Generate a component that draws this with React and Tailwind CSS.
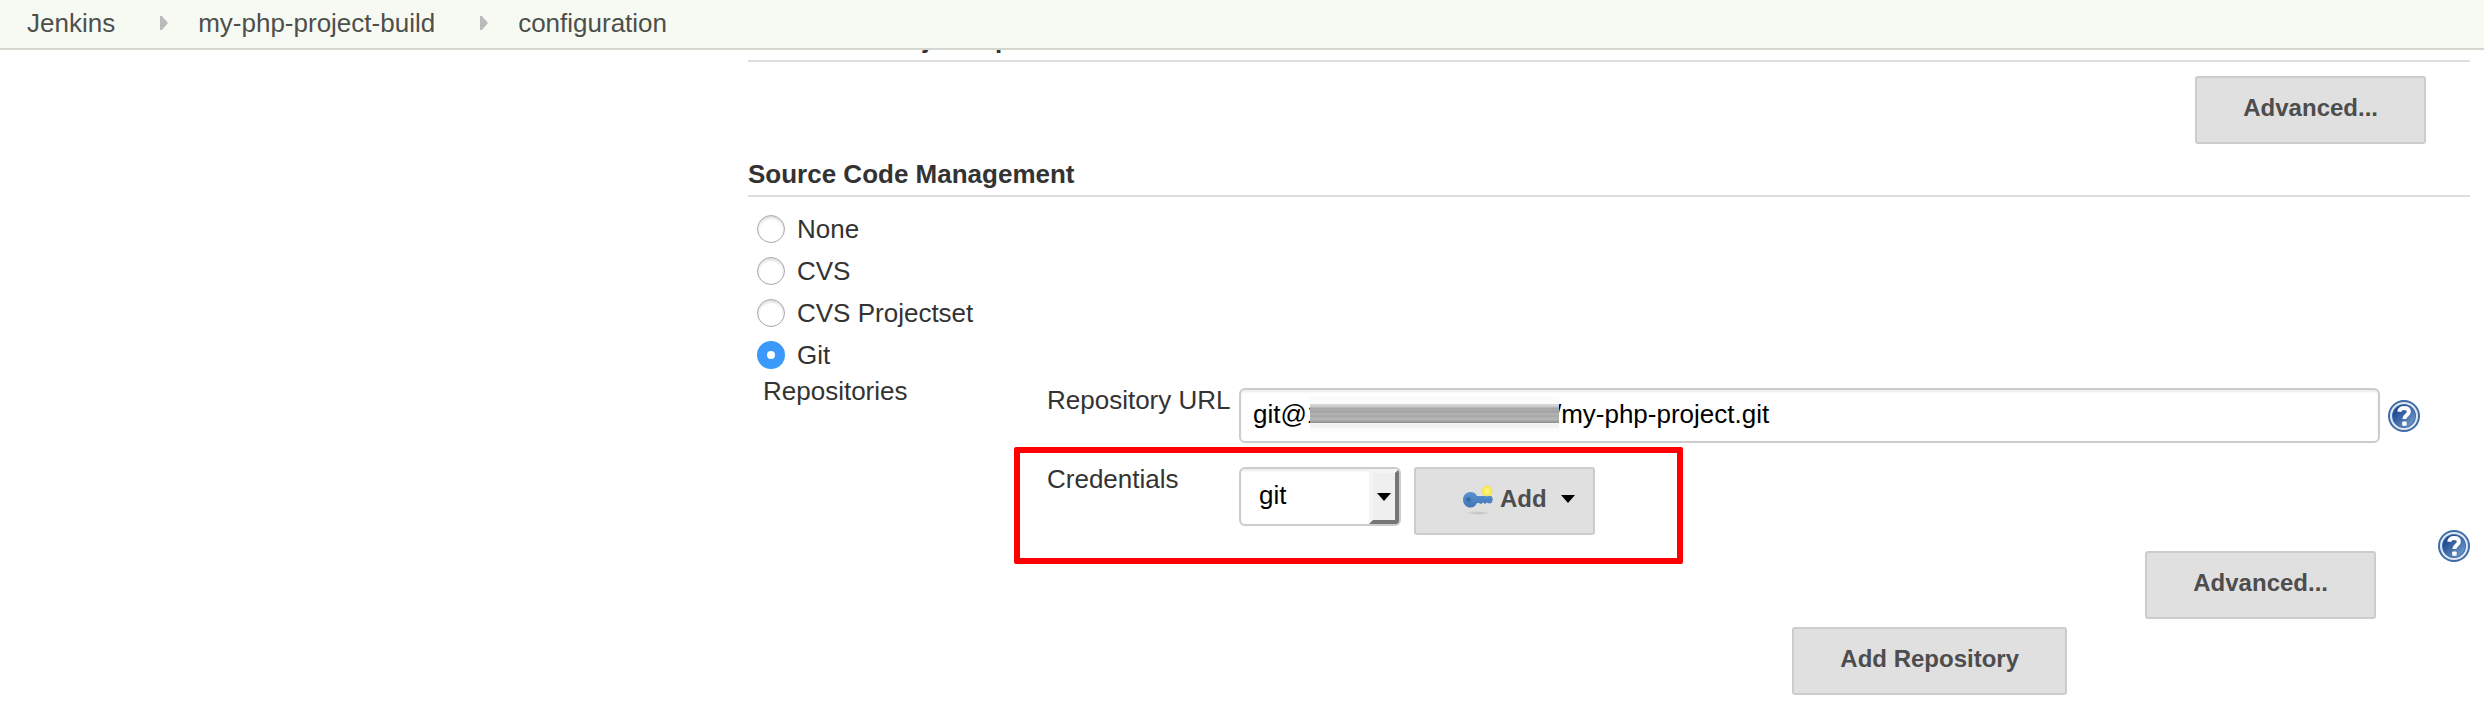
import React from "react";

const HEADING =
  "border-b-2 border-[#dedede] pb-1.5 text-[26px] leading-[30px] font-bold text-[#333333]";

const BUTTON =
  "flex shrink-0 items-center rounded-[3px] border-2 border-[#cccccc] bg-[#e0e0e0] pt-4 pb-5 text-2xl leading-7 font-bold whitespace-nowrap text-[#4d4d4d]";

function HelpIcon({ label }) {
  return (
    <button type="button" aria-label={label} className="block size-8 shrink-0">
      <svg viewBox="0 0 32 32" className="size-8">
        <defs>
          <linearGradient id="helpFill" x1="0" y1="0" x2="1" y2="1">
            <stop offset="0.2" stopColor="#1f4a90" />
            <stop offset="1" stopColor="#7ba3d0" />
          </linearGradient>
        </defs>
        <circle cx="16" cy="16" r="16" fill="#3f6ca9" />
        <circle cx="16" cy="16" r="13" fill="none" stroke="#dfe8f3" strokeWidth="2" />
        <circle cx="16" cy="16" r="11" fill="url(#helpFill)" />
        <path
          d="M11.2 11.800c.3-2.700 2.200-3.800 4.900-3.800 2.800 0 4.800 1.300 4.800 3.700 0 3.400-4.500 3.200-4.500 7.300"
          fill="none"
          stroke="#fff"
          strokeWidth="4"
        />
        <rect x="14.200" y="21.500" width="4.400" height="4.200" rx="0.800" fill="#fff" />
      </svg>
    </button>
  );
}

function KeyIcon() {
  return (
    <svg viewBox="0 0 32 32" className="-my-1 size-8" aria-hidden="true">
      <defs>
        <radialGradient id="spark">
          <stop offset="0.2" stopColor="#fff58a" />
          <stop offset="0.7" stopColor="#f8e93c" />
          <stop offset="1" stopColor="#f8e72e" stopOpacity="0" />
        </radialGradient>
        <linearGradient id="keyFill" x1="0" y1="0" x2="0" y2="1">
          <stop offset="0" stopColor="#5b93cf" />
          <stop offset="1" stopColor="#3f76b8" />
        </linearGradient>
        <radialGradient id="keyShadow">
          <stop offset="0" stopColor="#bdbdbd" />
          <stop offset="1" stopColor="#e0e0e0" />
        </radialGradient>
      </defs>
      <ellipse cx="16" cy="30" rx="13" ry="2" fill="url(#keyShadow)" />
      <path
        d="M8.500 9c3.200 0 5.300 1.600 6.500 4h14.500l1.500 3-1.500 4-2.500.500-2-1-2 1.500-2-1.500-2 1.500-2.500-1H15c-1.200 2.600-3.300 4.500-6.500 4.500C4.300 24.500 1 21 1 16.700S4.300 9 8.500 9z"
        fill="url(#keyFill)"
      />
      <circle cx="25" cy="8" r="6" fill="url(#spark)" />
      <circle cx="6.500" cy="16.500" r="2.200" fill="#38699f" />
    </svg>
  );
}

function Button({ children }) {
  return (
    <button type="button" className={`${BUTTON} px-[46px]`}>
      {children}
    </button>
  );
}

function Separator() {
  return (
    <svg viewBox="0 0 8 14" className="mr-[30px] ml-[45px] h-3.5 w-2" aria-hidden="true">
      <path d="M0 0h2l6 7-6 7H0z" fill="#bbbbbb" />
    </svg>
  );
}

function Radio({ label, checked }) {
  return (
    <label className="flex h-[42px] items-center gap-3 pl-[9px]">
      <input
        type="radio"
        name="scm"
        defaultChecked={checked}
        className="size-7 appearance-none rounded-full border border-[#a9a9a9] bg-white shadow-[inset_0_2px_3px_rgba(0,0,0,0.15)] checked:border-[10px] checked:border-[#3b99fc] checked:shadow-none"
      />
      <span>{label}</span>
    </label>
  );
}

const URL_VALUE = "git@1" + "\u00a0".repeat(15) + "-" + "\u00a0".repeat(16) + "/my-php-project.git";

export default function App() {
  return (
    <div className="font-['Liberation_Sans',Arial,sans-serif] text-[26px] leading-[30px] text-[#333333]">
      <header className="sticky top-0 z-10 border-b-2 border-[#d3d7cf] bg-[#f7faf3]">
        <nav aria-label="Breadcrumb" className="flex h-12 items-center pb-0.5 pl-[27px] text-[#4d4f4b]">
          <a href="#jenkins">Jenkins</a>
          <Separator />
          <a href="#project">my-php-project-build</a>
          <Separator />
          <a href="#configuration">configuration</a>
        </nav>
      </header>

      <main className="-mt-[26px] pr-3.5 pb-5 pl-[748px]">
        <section>
          <h2 className={HEADING}>Advanced Project Options</h2>
          <div className="flex justify-end pt-3.5 pr-11 pb-[15px]">
            <Button>Advanced...</Button>
          </div>
        </section>

        <section>
          <h2 className={HEADING}>Source Code Management</h2>
          <div className="flex flex-col items-start pt-[11px]">
            <Radio label="None" />
            <Radio label="CVS" />
            <Radio label="CVS Projectset" />
            <Radio label="Git" checked />
          </div>

          <div className="flex items-start pl-[15px]">
            <div className="w-[284px] shrink-0">Repositories</div>

            <div className="min-w-0 flex-1">
              <div className="flex items-start py-3">
                <label htmlFor="url" className="-mt-[3px] w-48 shrink-0">
                  Repository URL
                </label>
                <div className="flex flex-1 items-center gap-2">
                  <div className="relative flex-1">
                    <input
                      id="url"
                      type="text"
                      defaultValue={URL_VALUE}
                      className="block h-[55px] w-full rounded-md border-2 border-[#cccccc] bg-white pr-3 pb-0.5 pl-3 text-black shadow-[inset_0_2px_2px_rgba(0,0,0,0.075)]"
                    />
                    <div
                      aria-hidden="true"
                      className="absolute top-2 left-[71px] h-9 w-[249px] bg-[linear-gradient(#fcfcfc_0px,#fafafa_8px,#dadada_8px,#c8c8c8_11px,#a6a6a6_12px,#acacac_14px,#a0a0a0_16px,#b6b6b6_18px,#a6a6a6_20px,#b8b8b8_23px,#a4a4a4_25px,#8c8c8c_27px,#f4f4f4_27px,#f0f0f0_31px,#fdfdfd_33px)]"
                    />
                  </div>
                  <HelpIcon label="Help for Repository URL" />
                </div>
              </div>

              <div className="relative flex items-start pt-3">
                <label htmlFor="credentials" className="-mt-[3px] w-48 shrink-0">
                  Credentials
                </label>
                <div className="relative mr-[13px]">
                  <select
                    id="credentials"
                    className="block h-[59px] w-[162px] appearance-none rounded-md border-2 border-[#cccccc] bg-white pb-1 pl-[18px] text-black shadow-[inset_0_2px_2px_rgba(0,0,0,0.075)]"
                  >
                    <option>git</option>
                  </select>
                  <span className="pointer-events-none absolute top-0.5 right-0.5 flex h-[55px] w-[30px] items-center justify-center rounded-r-sm border-t-4 border-r-4 border-b-4 border-l-4 border-t-[#f4f4f4] border-r-[#767676] border-b-[#767676] border-l-[#f4f4f4] bg-[#efefef]">
                    <svg viewBox="0 0 14 8" className="h-2 w-3.5" aria-hidden="true">
                      <path d="M0 0h14L7 8z" fill="#000" />
                    </svg>
                  </span>
                </div>
                <button type="button" className={`${BUTTON} pr-[18px] pl-[46px]`}>
                  <KeyIcon />
                  <span className="ml-1.5">Add</span>
                  <svg viewBox="0 0 14 8" className="ml-3.5 h-2 w-3.5" aria-hidden="true">
                    <path d="M0 0h14L7 8z" fill="#000" />
                  </svg>
                </button>
                <div className="pointer-events-none absolute -top-2 -left-[33px] h-[117px] w-[669px] rounded-[2px] border-6 border-[#ff0000]" />
              </div>

              <div className="flex justify-end pt-4 pr-11">
                <Button>Advanced...</Button>
              </div>
              <div className="flex justify-end pt-2 pr-[353px]">
                <Button>Add Repository</Button>
              </div>
            </div>

            <div className="mt-[154px] ml-[18px]">
              <HelpIcon label="Help for Repositories" />
            </div>
          </div>
        </section>
      </main>
    </div>
  );
}
